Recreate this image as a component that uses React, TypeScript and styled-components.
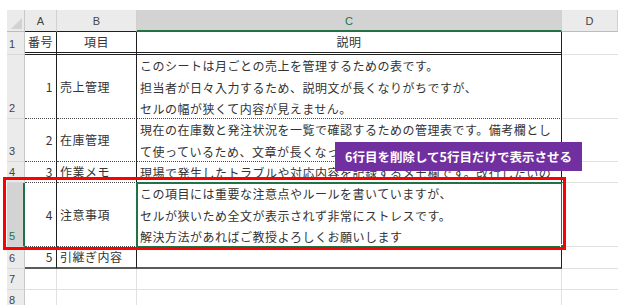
import React from 'react'
import styled, { createGlobalStyle } from 'styled-components'

const GREEN = '#217346'
const INK = '#1f1f1f'
const GRID = '#e1e1e1'

const GlobalStyle = createGlobalStyle`
  html, body {
    margin: 0;
    background: #fff;
  }
  body {
    font-family: 'Noto Sans CJK JP', 'Noto Sans', sans-serif;
  }
`

type Edge = 'double' | 'dotted' | 'thick' | 'grid'
type Side = 'line' | 'grid' | 'none'
type Under = 'table' | 'active' | 'plain'

const bottomBorder: Record<Edge, string> = {
  double: `3px double ${INK}`,
  dotted: '1px dotted #4a4a4a',
  thick: '2px solid #5a5a5a',
  grid: `1px solid ${GRID}`,
}

const rightBorder: Record<Side, string> = {
  line: `1px solid ${INK}`,
  grid: `1px solid ${GRID}`,
  none: '0',
}

const Page = styled.div`
  position: relative;
  width: 618px;
  height: 305px;
  overflow: hidden;
  box-sizing: border-box;
  padding: 10px 0 0 7px;
  background: #fff;
`

const Sheet = styled.div`
  display: grid;
  grid-template-columns: 18px 32px 80px 425px 1fr;
  grid-template-rows: 22px 23px 64px 43px 21px 64px 22px 21px 21px;
`

const Corner = styled.div`
  position: relative;
  box-sizing: border-box;
  background: #ebebeb;
  border-right: 1px solid #c8c8c8;
  border-bottom: 1px solid #bcbcbc;

  &::after {
    content: '';
    position: absolute;
    right: 2px;
    bottom: 2px;
    width: 11px;
    height: 11px;
    background: #d2d2d2;
    clip-path: polygon(100% 0, 100% 100%, 0 100%);
  }
`

const ColHead = styled.div<{ $under: Under }>`
  display: flex;
  align-items: center;
  justify-content: center;
  box-sizing: border-box;
  padding-top: 1px;
  background: ${({ $under }) => ($under === 'active' ? '#d3d3d3' : '#ebebeb')};
  color: ${({ $under }) => ($under === 'active' ? GREEN : '#444')};
  font: 11px 'Liberation Sans', Arial, sans-serif;
  border-right: 1px solid #d0d0d0;
  border-bottom: ${({ $under }) =>
    $under === 'active'
      ? `2px solid ${GREEN}`
      : $under === 'table'
        ? `1px solid ${INK}`
        : '1px solid #bcbcbc'};
`

const RowHead = styled.div<{ $active?: boolean }>`
  display: flex;
  align-items: flex-end;
  box-sizing: border-box;
  padding: 0 0 2px 2px;
  background: ${({ $active }) => ($active ? '#d3d3d3' : '#ebebeb')};
  color: ${({ $active }) => ($active ? GREEN : '#444')};
  font: 11px/16px 'Liberation Sans', Arial, sans-serif;
  border-right: ${({ $active }) => ($active ? `2px solid ${GREEN}` : '1px solid #c8c8c8')};
  border-bottom: 1px solid #d8d8d8;
`

const Cell = styled.div<{
  $align?: 'left' | 'right' | 'center'
  $bottom: Edge
  $right: Side
  $middle?: boolean
  $selected?: boolean
}>`
  display: flex;
  flex-direction: column;
  justify-content: ${({ $middle }) => ($middle ? 'center' : 'flex-start')};
  align-items: ${({ $align }) =>
    $align === 'right' ? 'flex-end' : $align === 'center' ? 'center' : 'flex-start'};
  box-sizing: border-box;
  padding: 0 3px;
  overflow: hidden;
  background: #fff;
  color: #333;
  font-size: 12px;
  letter-spacing: 0.5px;
  line-height: 16px;
  border-bottom: ${({ $bottom }) => bottomBorder[$bottom]};
  border-right: ${({ $right }) => rightBorder[$right]};
  outline: ${({ $selected }) => ($selected ? `2px solid ${GREEN}` : 'none')};
  outline-offset: -1px;
`

const Line = styled.span`
  display: block;
  white-space: nowrap;
  line-height: 21.5px;
`

const Handle = styled.div`
  position: absolute;
  left: 560px;
  top: 244px;
  width: 4px;
  height: 4px;
  background: ${GREEN};
  border: 1px solid #fff;
  z-index: 2;
`

const Callout = styled.div`
  position: absolute;
  left: 3px;
  top: 177px;
  width: 563px;
  height: 73px;
  box-sizing: border-box;
  border: 3px solid #ff0000;
  z-index: 3;
`

const Banner = styled.div`
  position: absolute;
  left: 335px;
  top: 142px;
  width: 247px;
  height: 29px;
  display: flex;
  align-items: center;
  justify-content: center;
  background: #7030a0;
  color: #fff;
  font-family: 'Noto Sans CJK JP', 'Noto Sans', sans-serif;
  font-size: 12.5px;
  font-weight: 700;
  z-index: 4;
`

interface DataRow {
  num: string
  title: string
  lines: string[]
  bottom: Edge
}

const rows: DataRow[] = [
  {
    num: '1',
    title: '売上管理',
    lines: [
      'このシートは月ごとの売上を管理するための表です。',
      '担当者が日々入力するため、説明文が長くなりがちですが、',
      'セルの幅が狭くて内容が見えません。',
    ],
    bottom: 'dotted',
  },
  {
    num: '2',
    title: '在庫管理',
    lines: [
      '現在の在庫数と発注状況を一覧で確認するための管理表です。備考欄とし',
      'て使っているため、文章が長くなってしまい、読みにくい状態です。',
    ],
    bottom: 'dotted',
  },
  {
    num: '3',
    title: '作業メモ',
    lines: ['現場で発生したトラブルや対応内容を記録するメモ欄です。改行したいの'],
    bottom: 'dotted',
  },
  {
    num: '4',
    title: '注意事項',
    lines: [
      'この項目には重要な注意点やルールを書いていますが、',
      'セルが狭いため全文が表示されず非常にストレスです。',
      '解決方法があればご教授よろしくお願いします',
    ],
    bottom: 'dotted',
  },
  {
    num: '5',
    title: '引継ぎ内容',
    lines: [],
    bottom: 'thick',
  },
]

export default function App() {
  return (
    <>
      <GlobalStyle />
      <Page>
        <Sheet>
          <Corner />
          <ColHead $under="table">A</ColHead>
          <ColHead $under="table">B</ColHead>
          <ColHead $under="active">C</ColHead>
          <ColHead $under="plain">D</ColHead>

          <RowHead>1</RowHead>
          <Cell $align="center" $middle $bottom="double" $right="line">番号</Cell>
          <Cell $align="center" $middle $bottom="double" $right="line">項目</Cell>
          <Cell $align="center" $middle $bottom="double" $right="line">説明</Cell>
          <Cell $bottom="grid" $right="none" />

          {rows.map((row, i) => {
            const selected = row.num === '4'
            return (
              <React.Fragment key={row.num}>
                <RowHead $active={selected}>{i + 2}</RowHead>
                <Cell $align="right" $middle $bottom={row.bottom} $right="line">
                  {row.num}
                </Cell>
                <Cell $middle $bottom={row.bottom} $right="line">
                  {row.title}
                </Cell>
                <Cell $bottom={row.bottom} $right="line" $selected={selected}>
                  {row.lines.map((text) => (
                    <Line key={text}>{text}</Line>
                  ))}
                </Cell>
                <Cell $bottom="grid" $right="none" />
              </React.Fragment>
            )
          })}

          {[7, 8].map((n) => (
            <React.Fragment key={n}>
              <RowHead>{n}</RowHead>
              <Cell $bottom="grid" $right="grid" />
              <Cell $bottom="grid" $right="grid" />
              <Cell $bottom="grid" $right="grid" />
              <Cell $bottom="grid" $right="none" />
            </React.Fragment>
          ))}
        </Sheet>

        <Handle />
        <Callout />
        <Banner>6行目を削除して5行目だけで表示させる</Banner>
      </Page>
    </>
  )
}
